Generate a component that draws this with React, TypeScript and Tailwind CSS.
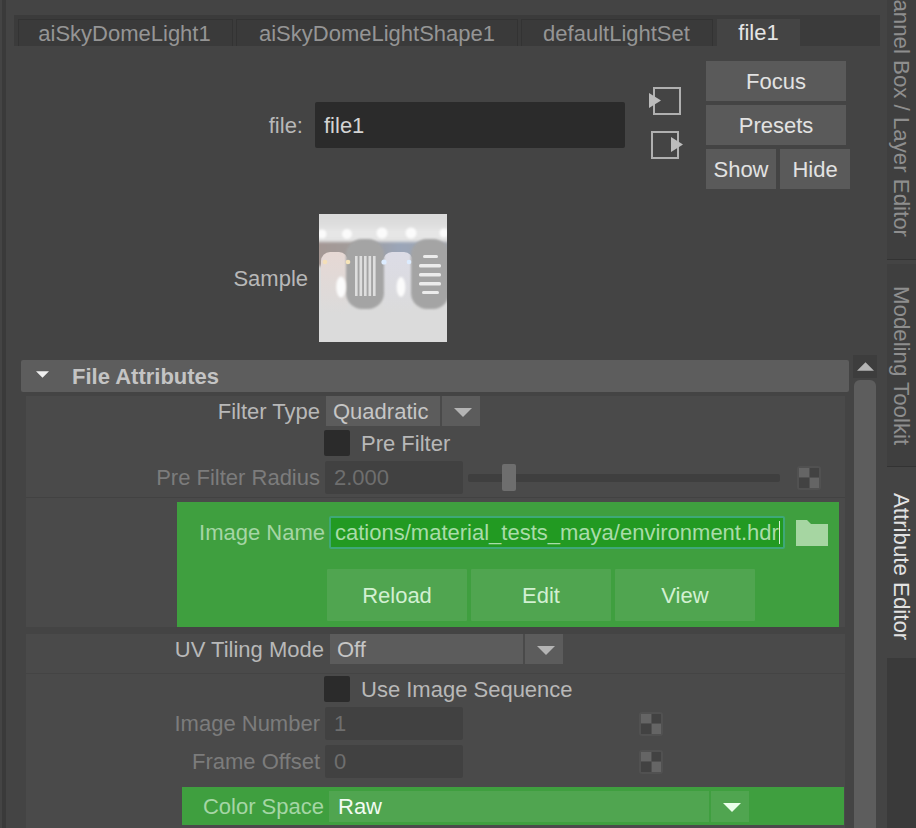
import React from "react";

const Tri = ({ c = "#b4b4b4", w = 18, h = 9 }: { c?: string; w?: number; h?: number }) => (
  <svg width={w} height={h} viewBox="0 0 18 9"><path d="M0 0H18L9 9Z" fill={c} /></svg>
);

const Checker = () => (
  <div className="grid h-[24px] w-[24px] grid-cols-2 gap-[1px] rounded-[3px] bg-[#515151] p-[2px]">
    <div className="bg-[#656565]" />
    <div className="bg-[#424242]" />
    <div className="bg-[#424242]" />
    <div className="bg-[#656565]" />
  </div>
);

const Box = () => <div className="h-[26px] w-[26px] rounded-[2px] bg-[#2b2b2b]" />;

const Tab = ({ w, children, active }: { w: string; children: string; active?: boolean }) => (
  <div className={`${w} flex h-[27px] items-center justify-center ${active ? "bg-[#444444] text-[#e4e4e4]" : "bg-[#3a3a3a] text-[#959595] border-t border-l border-r border-[#333333]"}`}>{children}</div>
);

const HBtn = ({ w, children }: { w: string; children: string }) => (
  <div className={`${w} flex h-[40px] items-center justify-center bg-[#5a5a5a] text-[#e2e2e2]`}>{children}</div>
);

const NumRow = ({ label, value }: { label: string; value: string }) => (
  <div className="flex h-[33px] items-center">
    <div className="w-[294px] text-right text-[#7c7c7c]">{label}</div>
    <div className="ml-[5px] flex h-[33px] w-[138px] items-center rounded-[2px] bg-[#414141] pl-[9px] text-[#6e6e6e]">{value}</div>
    <div className="ml-[176px]"><Checker /></div>
  </div>
);

const GBtn = ({ children }: { children: string }) => (
  <div className="flex h-[52px] w-[140px] items-center justify-center rounded-[1px] bg-[#50a550] text-[#d2f0d2]">{children}</div>
);

const Sample = () => (
  <svg width="128" height="128" viewBox="0 0 128 128" className="block">
    <defs>
      <filter id="b0" x="-30%" y="-30%" width="160%" height="160%"><feGaussianBlur stdDeviation="0.6" /></filter>
      <filter id="b1" x="-30%" y="-30%" width="160%" height="160%"><feGaussianBlur stdDeviation="1.3" /></filter>
      <filter id="b2" x="-20%" y="-60%" width="140%" height="220%"><feGaussianBlur stdDeviation="1.6" /></filter>
      <filter id="b3" x="-20%" y="-80%" width="140%" height="260%"><feGaussianBlur stdDeviation="5" /></filter>
      <linearGradient id="band" x1="0" x2="1" y1="0" y2="0">
        <stop offset="0" stopColor="#a59793" />
        <stop offset="0.35" stopColor="#a09c9c" />
        <stop offset="0.62" stopColor="#9aa5b8" />
        <stop offset="1" stopColor="#a2a4aa" />
      </linearGradient>
      <linearGradient id="pink" x1="0" x2="0" y1="0" y2="1">
        <stop offset="0" stopColor="#e6d8d4" />
        <stop offset="1" stopColor="#dbdbdb" />
      </linearGradient>
      <linearGradient id="blue" x1="0" x2="0" y1="0" y2="1">
        <stop offset="0" stopColor="#dcdce6" />
        <stop offset="1" stopColor="#dbdbdb" />
      </linearGradient>
      <clipPath id="cp"><rect width="128" height="128" /></clipPath>
    </defs>
    <g clipPath="url(#cp)">
      <rect width="128" height="128" fill="#dbdbdb" />
      <rect x="-10" y="14" width="148" height="12" fill="#e9e9e9" filter="url(#b3)" />
      <rect x="-6" y="28" width="140" height="24" fill="url(#band)" filter="url(#b2)" />
      <rect x="2" y="38" width="27" height="62" rx="9" fill="url(#pink)" filter="url(#b0)" />
      <rect x="64" y="38" width="30" height="62" rx="9" fill="url(#blue)" filter="url(#b0)" />
      <rect x="27" y="25" width="38" height="70" rx="16" fill="#a4a4a4" filter="url(#b1)" />
      <rect x="92" y="25" width="38" height="70" rx="16" fill="#a4a4a4" filter="url(#b1)" />
      <g fill="#dedede" filter="url(#b0)">
        <rect x="36" y="42" width="2.6" height="40" />
        <rect x="40.5" y="42" width="2.6" height="40" />
        <rect x="45" y="42" width="2.6" height="40" />
        <rect x="49.5" y="42" width="2.6" height="40" />
        <rect x="54" y="42" width="2.6" height="40" />
      </g>
      <g fill="#ececec" filter="url(#b0)">
        <rect x="104" y="41" width="15" height="3" rx="1.5" />
        <rect x="100" y="50" width="22" height="3.5" rx="1.5" />
        <rect x="100" y="59" width="22" height="3.5" rx="1.5" />
        <rect x="100" y="68" width="22" height="3.5" rx="1.5" />
        <rect x="103" y="77" width="17" height="3" rx="1.5" />
      </g>
      <g fill="#fbfbfb" filter="url(#b1)">
        <circle cx="3" cy="20" r="4.5" />
        <circle cx="28" cy="20" r="5" />
        <circle cx="63" cy="19" r="5.5" />
        <circle cx="92" cy="19" r="5.5" />
        <circle cx="125" cy="19" r="4.5" />
        <ellipse cx="22" cy="73" rx="4.8" ry="10.5" />
        <ellipse cx="82" cy="73" rx="4.4" ry="10" />
      </g>
      <g filter="url(#b0)">
        <circle cx="6" cy="48" r="2.3" fill="#f4dfb8" />
        <circle cx="29" cy="48" r="2.3" fill="#f6e4b8" />
        <circle cx="65" cy="48" r="2.6" fill="#dcecff" />
        <circle cx="90" cy="48" r="2.3" fill="#dcecff" />
      </g>
    </g>
  </svg>
);

export default function App() {
  return (
    <div className="flex h-[828px] w-[916px] overflow-hidden bg-[#444444] text-[22px] leading-[23px] text-[#b8b8b8] [font-family:'Liberation_Sans',Arial,sans-serif]">
      <div className="ml-[2px] h-full w-[4px] shrink-0 bg-[#3a3a3a]" />
      <div className="flex w-[881px] shrink-0 flex-col">
        {/* tab strip */}
        <div className="ml-[8px] mt-[15px] flex h-[31px] w-[866px] shrink-0 items-end gap-[3px] bg-[#3b3b3b] pl-[4px]">
          <Tab w="w-[215px] pr-[2px]">aiSkyDomeLight1</Tab>
          <Tab w="w-[282px]">aiSkyDomeLightShape1</Tab>
          <Tab w="w-[192px] pr-[1px]">defaultLightSet</Tab>
          <Tab w="w-[83px] ml-[1px]" active>file1</Tab>
        </div>

        {/* node row */}
        <div className="mt-[15px] flex shrink-0 items-center">
          <div className="w-[297px] text-right">file:</div>
          <div className="ml-[12px] flex h-[46px] w-[310px] items-center rounded-[2px] bg-[#2b2b2b] pl-[9px] text-[#d4d4d4]">file1</div>
          <div className="mb-[4px] ml-[24px] flex w-[36px] flex-col gap-[16px]">
            <svg width="36" height="28" viewBox="0 0 36 28">
              <rect x="5" y="1" width="26" height="26" fill="none" stroke="#b0b0b0" strokeWidth="2" />
              <path d="M0 6L12 13.5L0 21Z" fill="#bcbcbc" />
            </svg>
            <svg width="36" height="28" viewBox="0 0 36 28">
              <rect x="3" y="1" width="26" height="26" fill="none" stroke="#b0b0b0" strokeWidth="2" />
              <path d="M22 6L34 13.5L22 21Z" fill="#bcbcbc" />
            </svg>
          </div>
          <div className="ml-[21px] flex w-[144px] flex-col gap-[4px]">
            <HBtn w="w-[140px]">Focus</HBtn>
            <HBtn w="w-[140px]">Presets</HBtn>
            <div className="flex gap-[4px]">
              <HBtn w="w-[70px]">Show</HBtn>
              <HBtn w="w-[70px]">Hide</HBtn>
            </div>
          </div>
        </div>

        {/* sample */}
        <div className="mt-[25px] flex shrink-0 items-center">
          <div className="w-[302px] text-right">Sample</div>
          <div className="ml-[11px]"><Sample /></div>
        </div>

        {/* attributes + scrollbar */}
        <div className="mt-[13px] flex flex-1 overflow-hidden">
          <div className="ml-[15px] w-[828px] shrink-0 pt-[5px]">
            <div className="flex h-[32px] items-center rounded-[2px] bg-[#5d5d5d] pl-[15px] font-bold text-[#c4c4c4]">
              <div className="mb-[3px]"><Tri c="#f0f0f0" w={13} h={7} /></div>
              <span className="ml-[23px]">File Attributes</span>
            </div>

            <div className="ml-[5px] mt-[4px] w-[819px] bg-[#4a4a4a]">
              <div className="flex h-[30px] items-center">
                <div className="w-[294px] text-right">Filter Type</div>
                <div className="ml-[6px] flex h-[30px] w-[114px] items-center bg-[#5c5c5c] pl-[7px] text-[#c6c6c6]">Quadratic</div>
                <div className="ml-[2px] flex h-[30px] w-[38px] items-center justify-center bg-[#5c5c5c] pl-[3px] pt-[2px]"><Tri /></div>
              </div>
              <div className="mt-[4px] flex h-[26px] items-center pl-[298px]">
                <Box />
                <span className="ml-[11px]">Pre Filter</span>
              </div>
              <div className="mt-[5px] flex h-[33px] items-center">
                <div className="w-[294px] text-right text-[#7c7c7c]">Pre Filter Radius</div>
                <div className="ml-[5px] flex h-[33px] w-[138px] items-center rounded-[2px] bg-[#414141] pl-[9px] text-[#6e6e6e]">2.000</div>
                <div className="ml-[5px] flex h-[8px] w-[312px] items-center rounded-[2px] bg-[#3f3f3f] pl-[34px]">
                  <div className="h-[27px] w-[14px] shrink-0 rounded-[2px] bg-[#6e6e6e]" />
                </div>
                <div className="ml-[17px]"><Checker /></div>
              </div>
              <div className="mt-[3px] h-[1px] bg-[#424242]" />
              <div className="flex pl-[151px] pt-[4px]">
                <div className="h-[125px] w-[662px] bg-[#3f9f3f] pt-[14px]">
                  <div className="flex h-[33px] items-center">
                    <div className="w-[148px] text-right text-[#a5d6a5]">Image Name</div>
                    <div className="ml-[4px] flex h-[33px] w-[456px] items-center rounded-[2px] border-[2px] border-[#3fa878] bg-[#229a22] pl-[4px] text-[#a9dca9]">
                      <span className="border-r border-[#d8f0d8]">cations/material_tests_maya/environment.hdr</span>
                    </div>
                    <svg className="ml-[11px]" width="32" height="26" viewBox="0 0 32 26"><path d="M0 0H11L15 4H32V26H0Z" fill="#a6d6a2" /></svg>
                  </div>
                  <div className="ml-[150px] mt-[20px] flex gap-[4px]">
                    <GBtn>Reload</GBtn>
                    <GBtn>Edit</GBtn>
                    <GBtn>View</GBtn>
                  </div>
                </div>
              </div>
            </div>

            <div className="ml-[5px] mt-[7px] flex h-[39px] w-[819px] bg-[#4a4a4a]">
              <div className="flex h-[30px] items-center">
                <div className="w-[298px] text-right">UV Tiling Mode</div>
                <div className="ml-[6px] flex h-[30px] w-[193px] items-center bg-[#5c5c5c] pl-[7px] text-[#c6c6c6]">Off</div>
                <div className="ml-[2px] flex h-[30px] w-[38px] items-center justify-center bg-[#5c5c5c] pl-[3px] pt-[2px]"><Tri /></div>
              </div>
            </div>
            <div className="ml-[5px] mt-[1px] h-[113px] w-[819px] bg-[#4a4a4a] pt-[2px]">
              <div className="flex h-[26px] items-center pl-[298px]">
                <Box />
                <span className="ml-[11px]">Use Image Sequence</span>
              </div>
              <div className="mt-[5px]"><NumRow label="Image Number" value="1" /></div>
              <div className="mt-[5px]"><NumRow label="Frame Offset" value="0" /></div>
            </div>
            <div className="ml-[5px] w-[819px] bg-[#4a4a4a] pb-[10px] pl-[156px]">
              <div className="flex h-[38px] w-[662px] items-center bg-[#3f9f3f]">
                <div className="w-[142px] text-right text-[#a5d6a5]">Color Space</div>
                <div className="ml-[5px] flex h-[31px] w-[380px] items-center bg-[#50a550] pl-[9px] text-[#f2fbf2]">Raw</div>
                <div className="ml-[2px] flex h-[31px] w-[38px] items-center justify-center bg-[#50a550] pl-[3px] pt-[2px]"><Tri c="#eaffea" /></div>
              </div>
            </div>
          </div>

          {/* scrollbar */}
          <div className="ml-[4px] flex w-[24px] shrink-0 flex-col">
            <div className="flex h-[23px] shrink-0 items-center justify-center bg-[#3d3d3d]">
              <div className="rotate-180"><Tri c="#b4b4b4" w={17} h={9} /></div>
            </div>
            <div className="mx-[1px] mt-[2px] flex-1 rounded-t-[6px] bg-[#5d5d5d]" />
          </div>
        </div>
      </div>

      {/* vertical tabs */}
      <div className="flex w-[29px] shrink-0 flex-col text-[22.25px]">
        <div className="flex h-[260px] shrink-0 flex-col items-center justify-end overflow-hidden border-b border-[#333333] bg-[#3f3f3f] pb-[22px] text-[#8e8e8e]">
          <span className="whitespace-nowrap [writing-mode:vertical-rl]">Channel Box / Layer Editor</span>
        </div>
        <div className="mt-[4px] flex h-[203px] shrink-0 flex-col items-center overflow-hidden border-b border-[#333333] bg-[#3f3f3f] pt-[22px] text-[#8e8e8e]">
          <span className="whitespace-nowrap [writing-mode:vertical-rl]">Modeling Toolkit</span>
        </div>
        <div className="flex h-[191px] shrink-0 flex-col items-center bg-[#444444] pt-[26px] text-[#e2e2e2]">
          <span className="whitespace-nowrap [writing-mode:vertical-rl]">Attribute Editor</span>
        </div>
        <div className="flex-1 bg-[#3a3a3a]" />
      </div>
    </div>
  );
}
